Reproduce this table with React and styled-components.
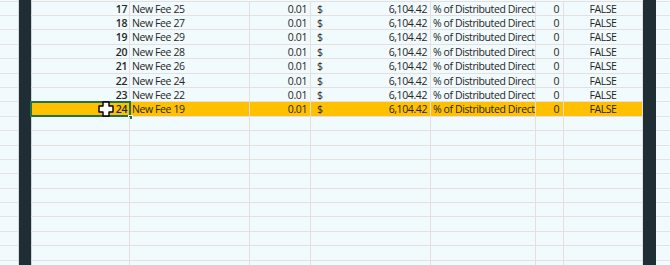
import React from "react";
import styled, { createGlobalStyle } from "styled-components";

const GlobalStyle = createGlobalStyle`
  html, body {
    margin: 0;
    padding: 0;
    background: #f1fafc;
  }
  body {
    width: 670px;
    height: 265px;
    overflow: hidden;
    font-family: "Open Sans", "Liberation Sans", sans-serif;
  }
`;

const ROW_H = 14.4;
const cols = [99, 120, 61, 120, 105, 28, 79];

const rows = [
  [17, "New Fee 25"],
  [18, "New Fee 27"],
  [19, "New Fee 29"],
  [20, "New Fee 28"],
  [21, "New Fee 26"],
  [22, "New Fee 24"],
  [23, "New Fee 22"],
  [24, "New Fee 19"],
];

const Page = styled.div`
  display: flex;
  height: 265px;
  overflow: hidden;
`;

const Strip = styled.div`
  width: ${(p) => p.$w}px;
  flex-shrink: 0;
  border-right: ${(p) => (p.$edge ? "1px solid #d9dcdd" : "none")};
  display: flex;
  flex-direction: column;
`;

const StripLine = styled.div`
  height: ${(p) => p.$h}px;
  flex-shrink: 0;
  box-sizing: border-box;
  border-bottom: 1px solid #e3e2e4;
`;

const DarkBar = styled.div`
  width: ${(p) => p.$w}px;
  flex-shrink: 0;
  background: #1f2d35;
`;

const Sheet = styled.div`
  width: 612px;
  flex-shrink: 0;
  display: flex;
  flex-direction: column;
  border-left: 1px solid #cfd3d4;
  box-sizing: border-box;
`;

const Row = styled.div`
  display: grid;
  grid-template-columns: ${cols.map((c) => c + "px").join(" ")};
  margin-left: -1px;
  height: ${(p) => p.$h || ROW_H}px;
  flex-shrink: 0;
  box-sizing: border-box;
  border-bottom: 1px solid #e6dfdf;
  background: ${(p) => (p.$hi ? "#ffc000" : "transparent")};
`;

const Cell = styled.div`
  position: relative;
  box-sizing: border-box;
  border-right: 1px solid #e6dfdf;
  display: flex;
  align-items: center;
  justify-content: ${(p) => p.$align || "flex-start"};
  padding: 0 ${(p) => (p.$pad ?? 2)}px 0 2px;
  font-size: 10.5px;
  color: #262626;
  font-weight: ${(p) => (p.$bold ? 600 : 400)};
  white-space: nowrap;
  overflow: visible;
  letter-spacing: -0.4px;
  outline: ${(p) => (p.$sel ? "2px solid #217346" : "none")};
  outline-offset: -1px;
`;

const Money = styled.div`
  flex: 1;
  display: flex;
  justify-content: space-between;
  padding: 0 3px 0 4px;
`;

const Handle = styled.span`
  position: absolute;
  right: -4px;
  bottom: -4px;
  width: 5px;
  height: 5px;
  background: #217346;
  border: 1px solid #f1fafc;
  box-sizing: border-box;
`;

const Cursor = styled.svg`
  position: absolute;
  left: 67px;
  top: -1px;
`;

const PlusCursor = () => (
  <Cursor width="16" height="16" viewBox="0 0 16 16">
    <path
      d="M5 1h6v4h4v6h-4v4h-6v-4h-4v-6h4z"
      fill="#fff"
      stroke="#000"
      strokeWidth="1.4"
      strokeLinejoin="round"
    />
  </Cursor>
);

const EMPTY = 12;

const App = () => {
  const lines = [1.6, ...Array(rows.length + EMPTY).fill(ROW_H)];
  return (
    <>
      <GlobalStyle />
      <Page>
        <Strip $w={18} $edge>
          {lines.map((h, i) => (
            <StripLine key={i} $h={h} />
          ))}
        </Strip>
        <DarkBar $w={12} />
        <Sheet>
          <Row $h={1.6} />
          {rows.map(([n, name]) => {
            const hi = n === 24;
            return (
              <Row key={n} $hi={hi}>
                <Cell $align="flex-end" $bold $sel={hi}>
                  {hi && <PlusCursor />}
                  {n}
                  {hi && <Handle />}
                </Cell>
                <Cell>{name}</Cell>
                <Cell $align="flex-end" $pad={3}>0.01</Cell>
                <Cell $pad={0}>
                  <Money>
                    <span>$</span>
                    <span>6,104.42</span>
                  </Money>
                </Cell>
                <Cell>% of Distributed Direct</Cell>
                <Cell $align="flex-end" $pad={4}>0</Cell>
                <Cell $align="center">FALSE</Cell>
              </Row>
            );
          })}
          {Array.from({ length: EMPTY }).map((_, i) => (
            <Row key={"e" + i}>
              {cols.map((c, j) => (
                <Cell key={j} />
              ))}
            </Row>
          ))}
        </Sheet>
        <DarkBar $w={13} />
        <Strip $w={15}>
          {lines.map((h, i) => (
            <StripLine key={i} $h={h} />
          ))}
        </Strip>
      </Page>
    </>
  );
};

export default App;
